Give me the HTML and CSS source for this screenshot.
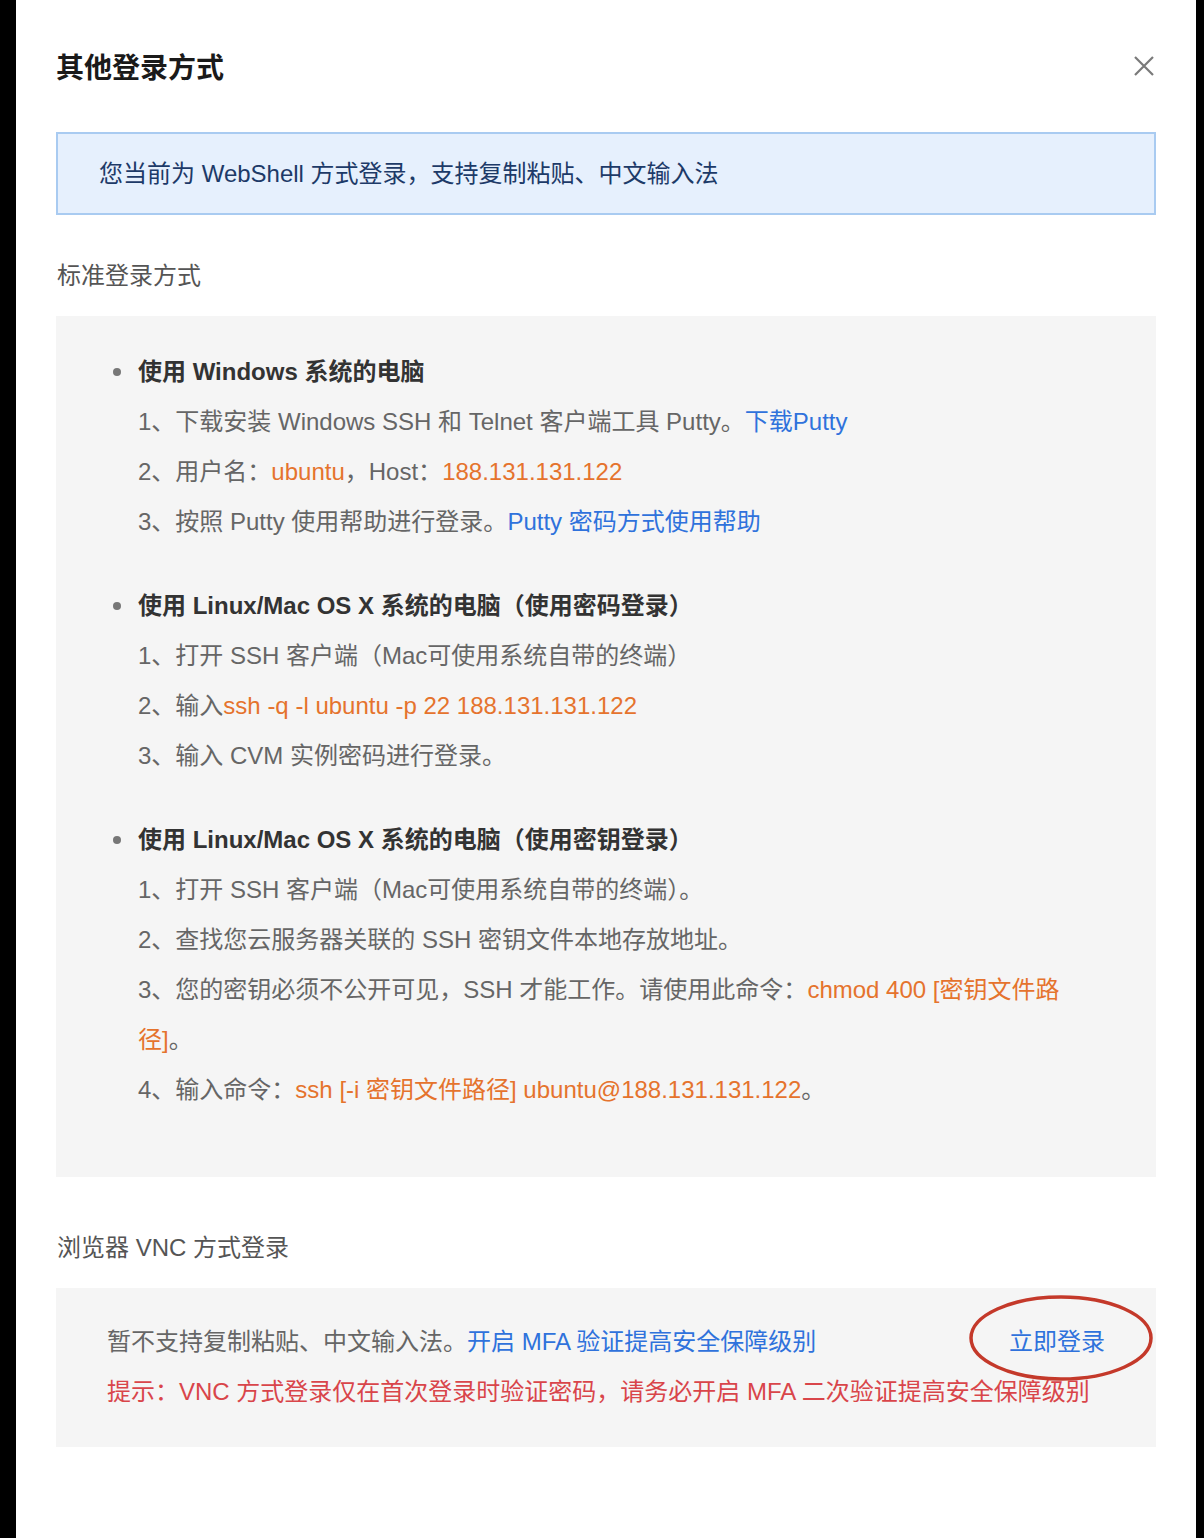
FILE: index.html
```html
<!DOCTYPE html>
<html lang="zh-CN">

<head>
  <meta charset="UTF-8" />
  <meta name="viewport" content="width=device-width, initial-scale=1.0" />
  <title>其他登录方式</title>
  <link rel="stylesheet" href="styles.css">
</head>

<body>
  <div class="dialog">
    <div class="dialog-header">
      <h2 class="dialog-title">其他登录方式</h2>
      <button class="close-btn" aria-label="关闭">
        <svg width="22" height="22" viewBox="0 0 22 22">
          <path d="M2 2 L20 20 M20 2 L2 20" stroke="#7a7a7a" stroke-width="2.2" fill="none" />
        </svg>
      </button>
    </div>

    <div class="notice">您当前为 WebShell 方式登录，支持复制粘贴、中文输入法</div>

    <div class="section-label">标准登录方式</div>
    <div class="guide">
      <div class="group">
        <div class="group-title"><span class="dot"></span>使用 Windows 系统的电脑</div>
        <p class="step">1、下载安装 Windows SSH 和 Telnet 客户端工具 Putty。<a class="link" href="#">下载Putty</a></p>
        <p class="step">2、用户名：<span class="hl">ubuntu</span>，Host：<span class="hl">188.131.131.122</span></p>
        <p class="step">3、按照 Putty 使用帮助进行登录。<a class="link" href="#">Putty 密码方式使用帮助</a></p>
      </div>

      <div class="group">
        <div class="group-title"><span class="dot"></span>使用 Linux/Mac OS X 系统的电脑（使用密码登录）</div>
        <p class="step">1、打开 SSH 客户端（Mac可使用系统自带的终端）</p>
        <p class="step">2、输入<span class="hl">ssh -q -l ubuntu -p 22 188.131.131.122</span></p>
        <p class="step">3、输入 CVM 实例密码进行登录。</p>
      </div>

      <div class="group">
        <div class="group-title"><span class="dot"></span>使用 Linux/Mac OS X 系统的电脑（使用密钥登录）</div>
        <p class="step">1、打开 SSH 客户端（Mac可使用系统自带的终端）。</p>
        <p class="step">2、查找您云服务器关联的 SSH 密钥文件本地存放地址。</p>
        <p class="step">3、您的密钥必须不公开可见，SSH 才能工作。请使用此命令：<span class="hl">chmod 400 [密钥文件路径]</span>。</p>
        <p class="step">4、输入命令：<span class="hl">ssh [-i 密钥文件路径] ubuntu@188.131.131.122</span>。</p>
      </div>
    </div>

    <div class="section-label vnc-label">浏览器 VNC 方式登录</div>
    <div class="vnc-box">
      <div class="vnc-row">
        <p class="vnc-text">暂不支持复制粘贴、中文输入法。<a class="link" href="#">开启 MFA 验证提高安全保障级别</a></p>
        <a class="login-link" href="#">立即登录
          <svg class="mark" width="186" height="88" viewBox="0 0 186 88">
            <ellipse cx="93" cy="44" rx="90" ry="41" stroke="#c4392a" stroke-width="3.5" fill="none" />
          </svg>
        </a>
      </div>
      <p class="vnc-tip">提示：VNC 方式登录仅在首次登录时验证密码，请务必开启 MFA 二次验证提高安全保障级别</p>
    </div>
  </div>
</body>

</html>
```

FILE: styles.css
```css
body {
  margin: 0;
  background-color: #000;
  font-family: "Liberation Sans", "Noto Sans CJK SC", sans-serif;
}

.dialog {
  margin-left: 16px;
  width: 1180px;
  min-height: 100vh;
  box-sizing: border-box;
  background-color: #fff;
  padding: 0 40px;
}

.dialog-header {
  height: 132px;
  display: flex;
  align-items: center;
  justify-content: space-between;
}

.dialog-title {
  margin: 0;
  font-size: 28px;
  font-weight: bold;
  color: #1a1a1a;
}

.close-btn {
  background: none;
  border: none;
  padding: 0;
  margin-right: 1px;
  display: flex;
  cursor: pointer;
}

.notice {
  background-color: #e6f0fd;
  border: 2px solid #a9cbf1;
  padding: 15px 40px 14px 41px;
  font-size: 24px;
  line-height: 50px;
  color: #1d3a68;
}

.section-label {
  margin: 36px 0 15px 1px;
  font-size: 24px;
  line-height: 50px;
  color: #555;
}

.vnc-label {
  margin-top: 46px;
}

.guide {
  background-color: #f5f5f5;
  padding: 31px 76px 62px 57px;
}

.group + .group {
  margin-top: 34px;
}

.group-title {
  display: flex;
  align-items: center;
  gap: 17px;
  font-size: 24px;
  line-height: 50px;
  font-weight: bold;
  color: #333;
}

.dot {
  width: 8px;
  height: 8px;
  border-radius: 50%;
  background-color: #777;
  flex-shrink: 0;
}

.step {
  margin: 0 0 0 25px;
  font-size: 24px;
  line-height: 50px;
  color: #666;
}

.hl {
  color: #e5732d;
}

.link {
  color: #2f72dc;
  text-decoration: none;
}

.vnc-box {
  background-color: #f5f5f5;
  padding: 29px 51px 30px 51px;
}

.vnc-row {
  display: flex;
  justify-content: space-between;
  align-items: center;
}

.vnc-text,
.vnc-tip {
  margin: 0;
  font-size: 24px;
  line-height: 50px;
  color: #666;
}

.vnc-tip {
  color: #d9454a;
}

.login-link {
  position: relative;
  font-size: 24px;
  line-height: 50px;
  color: #2f72dc;
  text-decoration: none;
}

.login-link .mark {
  position: absolute;
  left: -41px;
  top: -23px;
  pointer-events: none;
}
```
